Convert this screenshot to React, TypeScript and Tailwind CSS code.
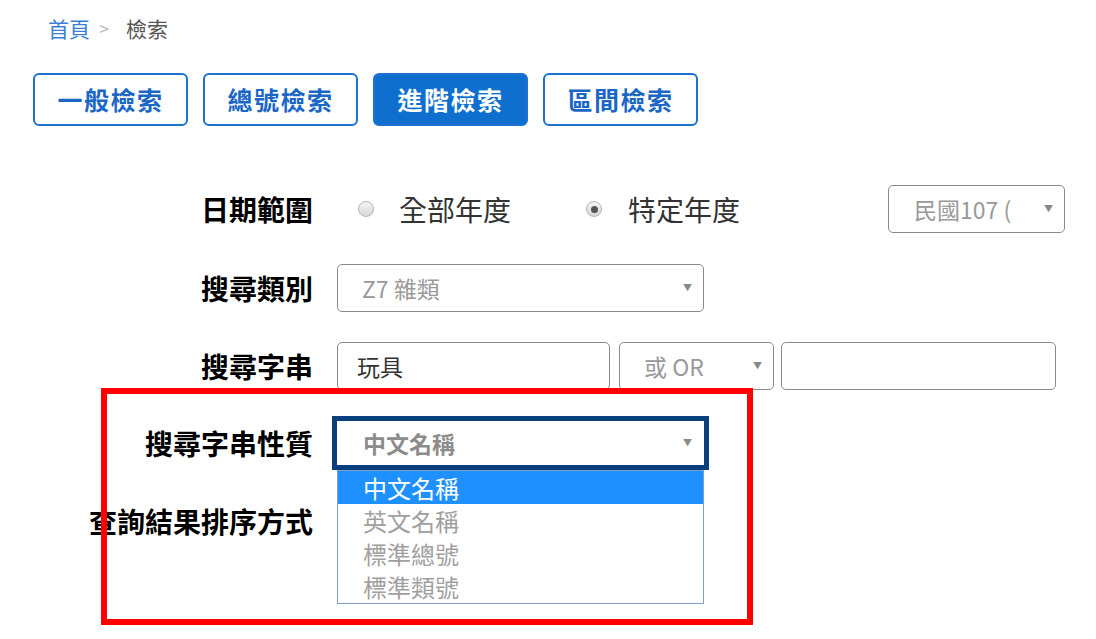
const font = "font-['Noto_Sans_CJK_TC','Noto_Sans',sans-serif]";

const Arrow = () => (
  <span className="absolute right-[11px] top-1/2 -translate-y-1/2 text-[9px] text-[#888]">▼</span>
);

const Radio = ({ checked }: { checked?: boolean }) => (
  <span className="flex h-[16px] w-[16px] items-center justify-center rounded-full border border-[#b5b5b5] bg-gradient-to-b from-[#f4f4f4] to-[#d6d6d6]">
    {checked && <span className="h-[7px] w-[7px] rounded-full bg-[#555]" />}
  </span>
);

const Label = ({ children }: { children: React.ReactNode }) => (
  <div className="w-[313px] shrink-0 text-right text-[28px] font-bold text-black">{children}</div>
);

const tabs = ["一般檢索", "總號檢索", "進階檢索", "區間檢索"];
const options = ["中文名稱", "英文名稱", "標準總號", "標準類號"];

export default function App() {
  return (
    <div className={`relative h-[639px] w-[1096px] overflow-hidden bg-white ${font}`}>
      {/* breadcrumb */}
      <div className="flex items-center pl-[48px] pt-[14px] text-[21px] leading-[28px]">
        <span className="text-[#3d7fd6]">首頁</span>
        <span className="ml-[9px] text-[18px] text-[#bbb]">&gt;</span>
        <span className="ml-[17px] text-[#555]">檢索</span>
      </div>

      {/* tabs */}
      <div className="mt-[31px] flex gap-[15px] pl-[33px]">
        {tabs.map((t, i) => (
          <button
            key={t}
            className={`flex h-[53px] w-[155px] items-center justify-center rounded-[6px] border-2 border-[#1d72cf] text-[25px] font-bold tracking-[1.5px] ${
              i === 2 ? "bg-[#0e6fcf] text-white" : "bg-white text-[#1b67c6]"
            }`}
          >
            {t}
          </button>
        ))}
      </div>

      {/* form */}
      <div className="mt-[59px] flex flex-col">
        <div className="flex h-[48px] items-center">
          <Label>日期範圍</Label>
          <div className="ml-[45px]"><Radio /></div>
          <span className="ml-[25px] w-[113px] text-[28px] leading-none text-[#333]">全部年度</span>
          <div className="ml-[74px]"><Radio checked /></div>
          <span className="ml-[26px] w-[112px] text-[28px] leading-none text-[#333]">特定年度</span>
          <div className="relative ml-[148px] flex h-[48px] w-[177px] items-center rounded-[5px] border border-[#8a8a8a] pl-[25px] text-[23px] text-[#999]">
            民國107 (
            <Arrow />
          </div>
        </div>

        <div className="mt-[31px] flex h-[48px] items-center">
          <Label>搜尋類別</Label>
          <div className="relative ml-[24px] flex h-[48px] w-[367px] items-center rounded-[5px] border border-[#8a8a8a] pl-[24px] text-[23px] text-[#999]">
            Z7 雜類
            <Arrow />
          </div>
        </div>

        <div className="mt-[30px] flex h-[48px] items-center">
          <Label>搜尋字串</Label>
          <div className="ml-[24px] flex h-[48px] w-[273px] items-center rounded-[5px] border border-[#8a8a8a] pl-[19px] text-[23px] text-[#333]">
            玩具
          </div>
          <div className="relative ml-[9px] flex h-[48px] w-[155px] items-center rounded-[5px] border border-[#8a8a8a] pl-[24px] text-[23px] text-[#999]">
            或 OR
            <Arrow />
          </div>
          <div className="ml-[7px] h-[48px] w-[275px] rounded-[5px] border border-[#8a8a8a]" />
        </div>

        <div className="mt-[26px] flex h-[54px] items-center">
          <Label>搜尋字串性質</Label>
          <div className="relative ml-[19px] flex h-[54px] w-[377px] items-center border-[5px] border-[#083f7c] pl-[26px] text-[23px] font-semibold text-[#8c8c8c]">
            中文名稱
            <span className="absolute right-[12px] top-1/2 -translate-y-1/2 text-[9px] font-normal text-[#888]">▼</span>
            <div className="absolute left-0 top-full z-10 mt-[5px] w-[367px] border border-[#7f9fc9] bg-white text-[24px] font-normal leading-[33px]">
              {options.map((o, i) => (
                <div key={o} className={`pl-[25px] ${i === 0 ? "bg-[#1e90ff] text-white" : "text-[#a0a0a0]"}`}>
                  {o}
                </div>
              ))}
            </div>
          </div>
        </div>

        <div className="mt-[27px] flex h-[48px] items-center">
          <Label>查詢結果排序方式</Label>
        </div>
      </div>

      {/* annotation box */}
      <div className="pointer-events-none absolute left-[101px] top-[388px] z-20 h-[237px] w-[652px] border-[6px] border-[#ff0000]" />
    </div>
  );
}
